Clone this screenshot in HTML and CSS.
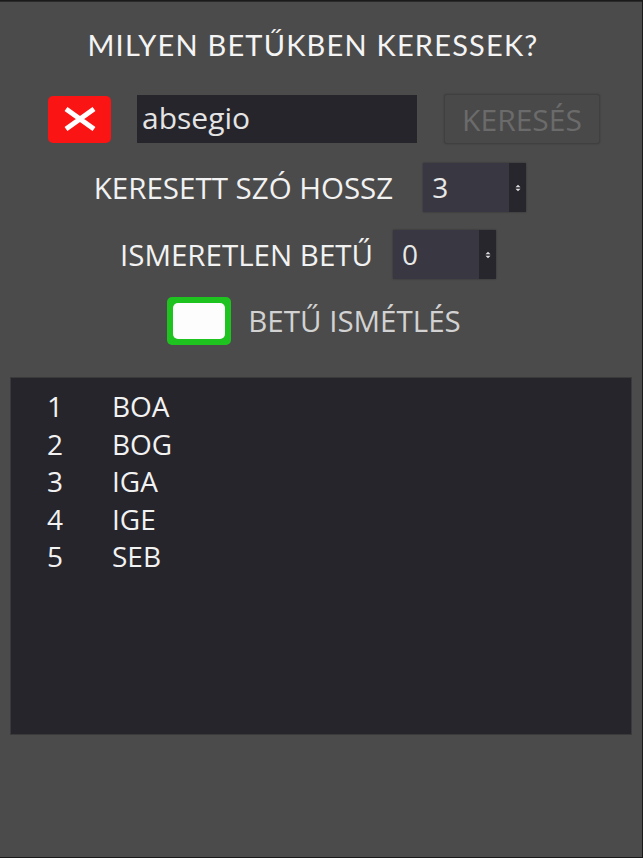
FILE: index.html
```html
<!DOCTYPE html>
<html lang="hu">
<head>
<meta charset="utf-8">
<title>Betűkereső</title>
<link rel="stylesheet" href="styles.css">
</head>
<body>
<div class="app">
  <h1 class="title">MILYEN BETŰKBEN KERESSEK?</h1>
  <div class="row-search">
    <button class="clear-btn" aria-label="Törlés">
      <svg width="36" height="24" viewBox="0 0 36 24"><path d="M4 2 L32 22 M32 2 L4 22" stroke="#fff" stroke-width="5" stroke-linecap="butt"/></svg>
    </button>
    <div class="text-input">absegio</div>
    <button class="search-btn">KERESÉS</button>
  </div>
  <div class="row-opt row-len">
    <span class="label">KERESETT SZÓ HOSSZ</span>
    <div class="select"><span class="sel-val">3</span><span class="sel-arrow"><svg width="6" height="8" viewBox="0 0 6 8"><path d="M0.5 3.3 L3 0.8 L5.5 3.3 Z M0.5 4.7 L3 7.2 L5.5 4.7 Z" fill="#ddd"/></svg></span></div>
  </div>
  <div class="row-opt row-unk">
    <span class="label">ISMERETLEN BETŰ</span>
    <div class="select"><span class="sel-val">0</span><span class="sel-arrow"><svg width="6" height="8" viewBox="0 0 6 8"><path d="M0.5 3.3 L3 0.8 L5.5 3.3 Z M0.5 4.7 L3 7.2 L5.5 4.7 Z" fill="#ddd"/></svg></span></div>
  </div>
  <div class="row-opt row-rep">
    <span class="checkbox"><span class="check-inner"></span></span>
    <span class="label label-dim">BETŰ ISMÉTLÉS</span>
  </div>
  <div class="results">
    <div class="res-row"><span class="num">1</span><span class="word">BOA</span></div>
    <div class="res-row"><span class="num">2</span><span class="word">BOG</span></div>
    <div class="res-row"><span class="num">3</span><span class="word">IGA</span></div>
    <div class="res-row"><span class="num">4</span><span class="word">IGE</span></div>
    <div class="res-row"><span class="num">5</span><span class="word">SEB</span></div>
  </div>
</div>
</body>
</html>
```

FILE: styles.css
```css
html, body {
  margin: 0;
  padding: 0;
  background: #1a1a1a;
}
body {
  width: 643px;
  height: 858px;
  overflow: hidden;
}
.app {
  box-sizing: border-box;
  width: 642px;
  height: 856px;
  margin-top: 1px;
  background: #4b4b4b;
  border-top: 1px solid #2a2a2a;
  display: flex;
  flex-direction: column;
  font-family: "Open Sans", "Noto Sans", sans-serif;
  color: #f2f2f2;
}
.title {
  margin: 25px 0 0 0;
  font-family: "Lato", "Open Sans", sans-serif;
  font-weight: 400;
  font-size: 29px;
  letter-spacing: 1.2px;
  line-height: 36px;
  text-align: center;
  color: #f4f4f4;
  padding-right: 16px;
}
.row-search {
  display: flex;
  align-items: center;
  margin-top: 31px;
  padding-left: 48px;
  height: 50px;
}
.clear-btn {
  width: 63px;
  height: 47px;
  border: none;
  border-radius: 5px;
  background: #fa1414;
  display: flex;
  align-items: center;
  justify-content: center;
  padding: 0;
}
.text-input {
  margin-left: 26px;
  width: 280px;
  height: 48px;
  box-sizing: border-box;
  background: #26252c;
  padding-left: 5px;
  font-size: 30px;
  line-height: 46px;
  color: #e4e4e4;
}
.search-btn {
  margin-left: 27px;
  width: 156px;
  height: 50px;
  box-sizing: border-box;
  background: #494949;
  border: 1px solid #404040;
  border-radius: 3px;
  font-family: "Open Sans", sans-serif;
  font-size: 30px;
  color: #6b6b6b;
  padding: 0;
  box-shadow: 0 0 2px rgba(0,0,0,0.25);
}
.row-opt {
  display: flex;
  align-items: center;
  justify-content: center;
}
.row-len {
  margin-top: 19px;
  padding-right: 22px;
}
.row-unk {
  margin-top: 18px;
  padding-right: 26px;
}
.row-rep {
  margin-top: 18px;
  padding-right: 14px;
}
.label {
  font-size: 29.5px;
  line-height: 40px;
  color: #f2f2f2;
}
.label-dim {
  color: #d2d2d2;
}
.row-len .label { margin-right: 30px; }
.row-unk .label { margin-right: 20px; }
.select {
  display: flex;
  width: 103px;
  height: 49px;
  box-shadow: 0 0 2px rgba(0,0,0,0.35);
}
.sel-val {
  flex: 1;
  background: #393842;
  font-size: 28px;
  line-height: 49px;
  padding-left: 9px;
  color: #e8e8e8;
}
.sel-arrow {
  width: 17px;
  background: #27262d;
  display: flex;
  align-items: center;
  justify-content: center;
}
.checkbox {
  box-sizing: border-box;
  width: 64px;
  height: 48px;
  background: #1fc31f;
  border-radius: 5px;
  padding: 6px;
  margin-right: 17px;
}
.check-inner {
  display: block;
  width: 100%;
  height: 100%;
  background: #fdfdfd;
  border-radius: 5px;
}
.results {
  margin: 32px 0 0 10px;
  width: 622px;
  height: 358px;
  box-sizing: border-box;
  background: #26252c;
  border: 1px solid #3a3a3a;
  padding-top: 10px;
}
.res-row {
  display: flex;
  height: 37.5px;
  font-size: 28px;
  line-height: 37.5px;
  color: #f2f2f2;
}
.num {
  width: 65px;
  padding-left: 36px;
}
```
